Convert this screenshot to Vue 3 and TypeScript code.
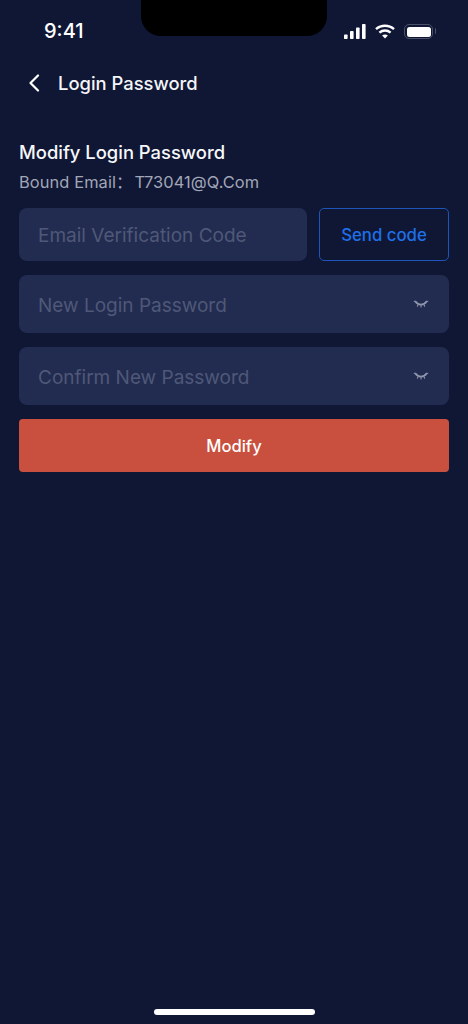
<script setup lang="ts">
const eyeFields: string[] = ['New Login Password', 'Confirm New Password']
</script>

<template>
  <div class="page">
    <div class="notch"></div>
    <header class="status">
      <span class="time">9:41</span>
      <div class="status-icons">
        <svg width="22" height="15" viewBox="0 0 22 15" fill="#fff">
          <rect x="0" y="10.500" width="3.6" height="4.5" rx="0.8" />
          <rect x="6" y="7" width="3.6" height="8" rx="0.8" />
          <rect x="12" y="3.500" width="3.6" height="11.500" rx="0.8" />
          <rect x="18" y="0" width="3.6" height="15" rx="0.8" />
        </svg>
        <svg class="wifi" width="20" height="15" viewBox="0 0 20 15" fill="none" stroke="#fff" stroke-width="2.4">
          <path d="M1 5.200C6 .6 14 .6 19 5.200" />
          <path d="M4.400 8.600c3.200-2.800 8-2.800 11.200 0" />
          <path d="M10 14.600l-2.900-3.200c1.700-1.300 4.100-1.300 5.800 0z" fill="#fff" stroke="none" />
        </svg>
        <div class="battery"><div class="battery-fill"></div></div>
      </div>
    </header>

    <nav class="nav">
      <svg class="back" width="12" height="18" viewBox="0 0 12 18" fill="none" stroke="#fff" stroke-width="2.2" stroke-linecap="round" stroke-linejoin="round">
        <path d="M10 1.500L2.500 9l7.500 7.500" />
      </svg>
      <h1 class="nav-title">Login Password</h1>
    </nav>

    <main class="content">
      <h2 class="heading">Modify Login Password</h2>
      <p class="bound">Bound Email<span class="colon">：</span>T73041@Q.Com</p>

      <div class="code-row">
        <div class="field field-code"><span class="placeholder">Email Verification Code</span></div>
        <button class="send" type="button">Send code</button>
      </div>

      <div v-for="label in eyeFields" :key="label" class="field field-pass">
        <span class="placeholder">{{ label }}</span>
        <svg class="eye" width="16" height="10" viewBox="0 0 16 10" fill="none" stroke="#9197ae" stroke-width="1.800" stroke-linecap="round">
          <path d="M2.500 2.600c2.500 4 8.500 4 11 0" />
          <path d="M1.200 2.200l1.300.6M14.800 2.200l-1.300.6M5 5.600l-.6 1.600M11 5.600l.6 1.600M8 6.300v1.700" stroke-width="1.100" stroke="#8a90a8" />
        </svg>
      </div>

      <button class="submit" type="button">Modify</button>
    </main>

    <div class="home-bar"></div>
  </div>
</template>

<style>
html, body { margin: 0; padding: 0; background: #0f1735; }
</style>

<style scoped>
.page {
  position: relative;
  width: 468px;
  height: 1024px;
  overflow: hidden;
  background: #0f1735;
  font-family: Inter, "Noto Sans CJK SC", "Noto Sans", sans-serif;
  display: flex;
  flex-direction: column;
  color: #fff;
}
.notch {
  position: absolute;
  top: 0;
  left: 141px;
  width: 186px;
  height: 36px;
  background: #000;
  border-radius: 0 0 20px 20px;
}
.status {
  height: 62px;
  box-sizing: border-box;
  padding: 19px 32px 0 44px;
  display: flex;
  justify-content: space-between;
  align-items: flex-start;
}
.time {
  font-size: 20px;
  line-height: 25px;
  font-weight: 500;
}
.status-icons {
  display: flex;
  align-items: center;
  gap: 9px;
  height: 25px;
  margin-right: 1px;
}
.battery {
  position: relative;
  width: 29px;
  height: 15px;
  margin-right: 2px;
  box-sizing: border-box;
  border: 1.500px solid #4a5068;
  border-radius: 5px;
  padding: 1.500px;
}
.battery::after {
  content: "";
  position: absolute;
  top: 3px;
  right: -4px;
  width: 1.500px;
  height: 6px;
  border-radius: 0 2px 2px 0;
  background: #4a5068;
}
.battery-fill {
  width: 100%;
  height: 100%;
  background: #fff;
  border-radius: 2.500px;
}
.nav {
  height: 42px;
  display: flex;
  align-items: center;
  padding-left: 28px;
  gap: 18px;
}
.nav-title {
  margin: 0;
  font-size: 18.4px;
  line-height: 42px;
  font-weight: 500;
  color: #f4f5f8;
}
.content {
  padding: 36px 19px 0;
  display: flex;
  flex-direction: column;
}
.heading {
  margin: 0;
  font-size: 18.4px;
  line-height: 24px;
  font-weight: 500;
  color: #f7f8fa;
}
.bound {
  margin: 8px 0 0;
  font-size: 16.4px;
  line-height: 20px;
  letter-spacing: 0.1px;
  color: #a2a6b6;
}
.colon {
  margin-right: 2px;
}
.code-row {
  display: flex;
  gap: 12px;
  margin-top: 16px;
}
.field {
  background: #222c50;
  border-radius: 8px;
  display: flex;
  align-items: center;
  padding: 0 19px;
  box-sizing: border-box;
}
.field-code {
  flex: 1;
  height: 53px;
}
.field-pass {
  height: 58px;
  margin-top: 14px;
  justify-content: space-between;
  padding-right: 20px;
}
.placeholder {
  padding-top: 2px;
  font-size: 19px;
  color: #4f5878;
}
.send {
  width: 130px;
  height: 53px;
  box-sizing: border-box;
  background: #0f1735;
  border: 1px solid #1d55b8;
  border-radius: 5px;
  color: #1f6fe8;
  font: 500 16.8px Inter, "Noto Sans", sans-serif;
  padding: 0;
}
.submit {
  height: 53px;
  margin-top: 14px;
  border: 0;
  border-radius: 4px;
  background: #c9503e;
  color: #fff;
  font: 500 16.6px Inter, "Noto Sans", sans-serif;
  padding: 0;
}
.home-bar {
  margin: auto auto 9px;
  width: 161px;
  height: 6px;
  border-radius: 3px;
  background: #fff;
}
</style>
